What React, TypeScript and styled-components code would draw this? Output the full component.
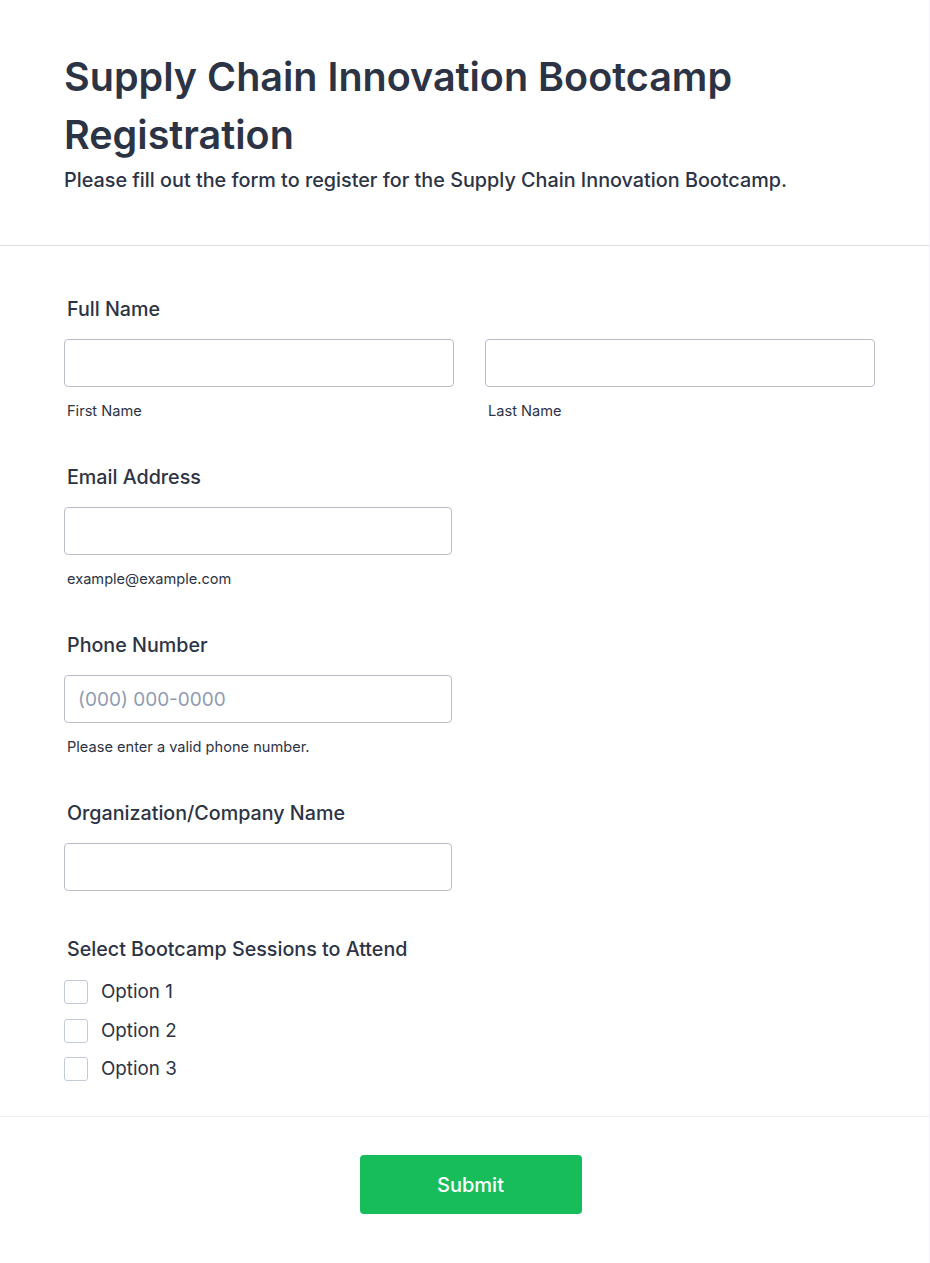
import React from "react";
import styled, { createGlobalStyle } from "styled-components";

const GlobalStyle = createGlobalStyle`
  html, body {
    margin: 0;
    padding: 0;
    background: #fff;
  }
  body {
    font-family: Inter, "Noto Sans", Arial, sans-serif;
    color: #2c3345;
  }
  * {
    box-sizing: border-box;
  }
`;

const Card = styled.form`
  width: 930px;
  min-height: 1263px;
  background: #fff;
  border-right: 1px solid #f3f3f8;
  border-bottom: 1px solid #f3f3f8;
  border-bottom-right-radius: 4px;
`;

const Header = styled.header`
  padding: 48px 64px 49px;
  border-bottom: 1px solid #dadde6;
`;

const Title = styled.h1`
  margin: 0;
  font-size: 39.5px;
  line-height: 58px;
  font-weight: 600;
  color: #2c3345;
`;

const Subtitle = styled.p`
  margin: 0;
  font-size: 19.8px;
  line-height: 32px;
  font-weight: 500;
  color: #2c3345;
`;

const Body = styled.div`
  padding: 49px 64px 35px;
  border-bottom: 1px solid #eceef4;
`;

const Field = styled.div<{ $gap?: number }>`
  margin-bottom: ${(p) => p.$gap ?? 42}px;
`;

const Label = styled.label<{ $tight?: boolean }>`
  display: block;
  margin: 0 0 ${(p) => (p.$tight ? 0 : 16)}px 3px;
  font-size: 19.7px;
  line-height: 28px;
  font-weight: 500;
  color: #2c3345;
`;

const Row = styled.div`
  display: grid;
  grid-template-columns: 390px 390px;
  column-gap: 31px;
`;

const Input = styled.input<{ $width?: number }>`
  display: block;
  width: ${(p) => (p.$width ? `${p.$width}px` : "100%")};
  height: 48px;
  padding: 0 13px;
  border: 1px solid #b8bdc9;
  border-radius: 4px;
  background: #fff;
  font-family: inherit;
  font-size: 19px;
  color: #2c3345;
  outline: none;

  &::placeholder {
    color: #8f9bb3;
  }
`;

const SubLabel = styled.span`
  display: block;
  margin: 14px 0 0 3px;
  font-size: 14.6px;
  line-height: 20px;
  color: #2c3345;
`;

const OptionList = styled.div`
  display: flex;
  flex-direction: column;
  gap: 14.5px;
  margin-top: 17px;
`;

const OptionRow = styled.label`
  display: flex;
  align-items: center;
  gap: 13px;
  font-size: 18.8px;
  line-height: 24px;
  color: #2c3345;
`;

const Box = styled.span`
  display: inline-block;
  width: 24px;
  height: 24px;
  border: 1px solid #c3cad8;
  border-radius: 3px;
  background: #fff;
`;

const Footer = styled.div`
  display: flex;
  justify-content: center;
  padding: 38px 0 50px 12px;
`;

const SubmitButton = styled.button`
  width: 222px;
  height: 59px;
  border: none;
  border-radius: 4px;
  background: #18bd5b;
  color: #fff;
  font-family: inherit;
  font-size: 20px;
  font-weight: 500;
  cursor: pointer;
`;

const options = ["Option 1", "Option 2", "Option 3"];

const App: React.FC = () => (
  <>
    <GlobalStyle />
    <Card onSubmit={(e) => e.preventDefault()}>
      <Header>
        <Title>Supply Chain Innovation Bootcamp Registration</Title>
        <Subtitle>
          Please fill out the form to register for the Supply Chain Innovation Bootcamp.
        </Subtitle>
      </Header>
      <Body>
        <Field>
          <Label>Full Name</Label>
          <Row>
            <div>
              <Input type="text" />
              <SubLabel>First Name</SubLabel>
            </div>
            <div>
              <Input type="text" />
              <SubLabel>Last Name</SubLabel>
            </div>
          </Row>
        </Field>
        <Field>
          <Label>Email Address</Label>
          <Input type="email" $width={388} />
          <SubLabel>example@example.com</SubLabel>
        </Field>
        <Field>
          <Label>Phone Number</Label>
          <Input type="tel" $width={388} placeholder="(000) 000-0000" />
          <SubLabel>Please enter a valid phone number.</SubLabel>
        </Field>
        <Field $gap={44}>
          <Label>Organization/Company Name</Label>
          <Input type="text" $width={388} />
        </Field>
        <Field $gap={0}>
          <Label $tight>Select Bootcamp Sessions to Attend</Label>
          <OptionList>
            {options.map((o) => (
              <OptionRow key={o}>
                <Box />
                {o}
              </OptionRow>
            ))}
          </OptionList>
        </Field>
      </Body>
      <Footer>
        <SubmitButton type="submit">Submit</SubmitButton>
      </Footer>
    </Card>
  </>
);

export default App;
